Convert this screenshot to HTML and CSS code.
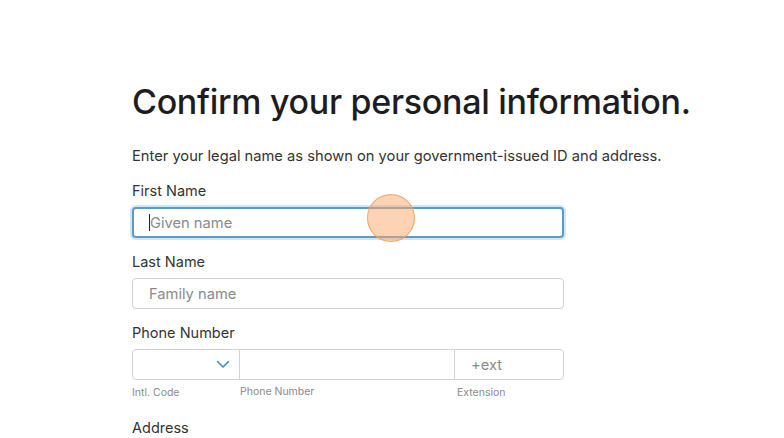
FILE: index.html
```html
<!DOCTYPE html>
<html>
<head>
<meta charset="utf-8">
<link rel="stylesheet" href="styles.css">
</head>
<body>
<main class="page">
  <h1 class="title">Confirm your personal information.</h1>
  <p class="intro">Enter your legal name as shown on your government-issued ID and address.</p>

  <div class="field first">
    <label class="label">First Name</label>
    <div class="input focused"><span class="caret"></span><span class="placeholder">Given name</span></div>
  </div>

  <div class="field">
    <label class="label">Last Name</label>
    <div class="input"><span class="placeholder">Family name</span></div>
  </div>

  <div class="field">
    <label class="label">Phone Number</label>
    <div class="phone">
      <div class="seg code">
        <svg class="chev" width="14" height="9" viewBox="0 0 14 9"><path d="M1.5 1.5 L7 7 L12.5 1.5" fill="none" stroke="#3c8dc8" stroke-width="1.6" stroke-linecap="round" stroke-linejoin="round"/></svg>
      </div>
      <div class="seg num"></div>
      <div class="seg ext"><span class="placeholder">+ext</span></div>
    </div>
    <div class="sublabels">
      <span class="sub code">Intl. Code</span>
      <span class="sub num">Phone Number</span>
      <span class="sub ext">Extension</span>
    </div>
  </div>

  <div class="field last">
    <label class="label">Address</label>
  </div>
</main>
<div class="touch"></div>
</body>
</html>
```

FILE: styles.css
```css
html, body {
  margin: 0;
  padding: 0;
  background: #ffffff;
}
body {
  font-family: Inter, "Liberation Sans", Arial, sans-serif;
  color: #1d1d1f;
  overflow: hidden;
  height: 438px;
}
.page {
  padding: 78px 0 0 132px;
  width: 432px;
}
.title {
  margin: 0;
  font-size: 34px;
  font-weight: 500;
  letter-spacing: -0.3px;
  line-height: 48px;
  white-space: nowrap;
  color: #1d1d1f;
}
.intro {
  margin: 20px 0 0 0;
  font-size: 14.7px;
  line-height: 20px;
  color: #333;
  white-space: nowrap;
}
.field {
  display: flex;
  flex-direction: column;
}
.label {
  font-size: 14.5px;
  line-height: 20px;
  color: #333;
  margin-top: 14px;
  margin-bottom: 6px;
}
.field.first .label { margin-top: 15px; }
.field.last .label { margin-top: 18px; }
.input {
  height: 31px;
  box-sizing: border-box;
  border: 1px solid #d2d2d7;
  border-radius: 4px;
  display: flex;
  align-items: center;
  padding-left: 16px;
  background: #fff;
}
.input.focused {
  border: 2px solid #5b9dc9;
  box-shadow: 0 0 0 2px rgba(120, 180, 225, 0.35);
  padding-left: 15px;
}
.caret {
  width: 1px;
  height: 17px;
  background: #222;
}
.placeholder {
  font-size: 14.7px;
  color: #8a8a8e;
}
.phone {
  display: flex;
  height: 31px;
  box-sizing: border-box;
  border: 1px solid #d2d2d7;
  border-radius: 4px;
}
.seg {
  display: flex;
  align-items: center;
  box-sizing: border-box;
}
.seg.code {
  width: 107px;
  justify-content: flex-end;
  padding-right: 9px;
  border-right: 1px solid #d2d2d7;
}
.seg.num {
  width: 215px;
  border-right: 1px solid #d2d2d7;
}
.seg.ext {
  flex: 1;
  padding-left: 16px;
}
.sublabels {
  display: flex;
  margin-top: 6px;
  font-size: 10.5px;
  line-height: 14px;
  color: #8a8a8e;
}
.sub.code { width: 108px; }
.sub.num { width: 217px; position: relative; top: -1px; }
.touch {
  position: absolute;
  left: 367px;
  top: 194px;
  width: 46px;
  height: 46px;
  border-radius: 50%;
  background: rgba(253, 168, 105, 0.5);
  border: 1.5px solid rgba(247, 160, 90, 0.9);
}
```
